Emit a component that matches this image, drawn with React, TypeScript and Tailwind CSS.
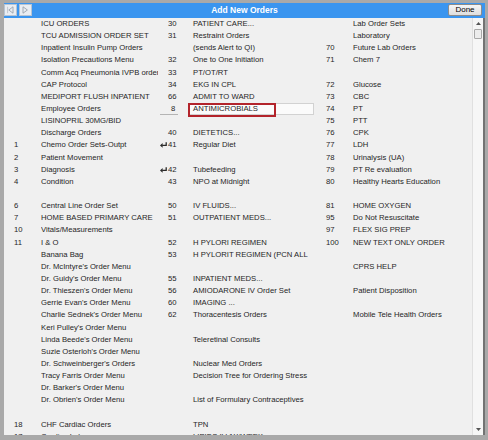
type Row = {
  n1?: string;
  a?: string;
  n2?: string;
  b?: string;
  n3?: string;
  c?: string;
  enter?: boolean;
  sel?: boolean;
};

const rows: Row[] = [
  { a: 'ICU ORDERS', n2: '30', b: 'PATIENT CARE...', c: 'Lab Order Sets' },
  { a: 'TCU ADMISSION ORDER SET', n2: '31', b: 'Restraint Orders', c: 'Laboratory' },
  { a: 'Inpatient Insulin Pump Orders', b: '(sends Alert to QI)', n3: '70', c: 'Future Lab Orders' },
  { a: 'Isolation Precautions Menu', n2: '32', b: 'One to One Initiation', n3: '71', c: 'Chem 7' },
  { a: 'Comm Acq Pneumonia IVPB order', n2: '33', b: 'PT/OT/RT' },
  { a: 'CAP Protocol', n2: '34', b: 'EKG IN CPL', n3: '72', c: 'Glucose' },
  { a: 'MEDIPORT FLUSH INPATIENT', n2: '66', b: 'ADMIT TO WARD', n3: '73', c: 'CBC' },
  { a: 'Employee Orders', n2: '8', b: 'ANTIMICROBIALS', n3: '74', c: 'PT', sel: true },
  { a: 'LISINOPRIL 30MG/BID', n3: '75', c: 'PTT' },
  { a: 'Discharge Orders', n2: '40', b: 'DIETETICS...', n3: '76', c: 'CPK' },
  { n1: '1', a: 'Chemo Order Sets-Outpt', n2: '41', enter: true, b: 'Regular Diet', n3: '77', c: 'LDH' },
  { n1: '2', a: 'Patient Movement', n3: '78', c: 'Urinalysis (UA)' },
  { n1: '3', a: 'Diagnosis', n2: '42', enter: true, b: 'Tubefeeding', n3: '79', c: 'PT Re evaluation' },
  { n1: '4', a: 'Condition', n2: '43', b: 'NPO at Midnight', n3: '80', c: 'Healthy Hearts Education' },
  {},
  { n1: '6', a: 'Central Line Order Set', n2: '50', b: 'IV FLUIDS...', n3: '81', c: 'HOME OXYGEN' },
  { n1: '7', a: 'HOME BASED PRIMARY CARE', n2: '51', b: 'OUTPATIENT MEDS...', n3: '95', c: 'Do Not Resuscitate' },
  { n1: '10', a: 'Vitals/Measurements', n3: '97', c: 'FLEX SIG PREP' },
  { n1: '11', a: 'I & O', n2: '52', b: 'H PYLORI REGIMEN', n3: '100', c: 'NEW TEXT ONLY ORDER' },
  { a: 'Banana Bag', n2: '53', b: 'H PYLORIT REGIMEN (PCN ALL' },
  { a: "Dr. McIntyre's Order Menu", c: 'CPRS HELP' },
  { a: "Dr. Guidy's Order Menu", n2: '55', b: 'INPATIENT MEDS...' },
  { a: "Dr. Thieszen's Order Menu", n2: '56', b: 'AMIODARONE IV Order Set', c: 'Patient Disposition' },
  { a: "Gerrie Evan's Order Menu", n2: '60', b: 'IMAGING ...' },
  { a: "Charlie Sednek's Order Menu", n2: '62', b: 'Thoracentesis Orders', c: 'Mobile Tele Health Orders' },
  { a: "Keri Pulley's Order Menu" },
  { a: "Linda Beede's Order Menu", b: 'Teleretinal Consults' },
  { a: "Suzie Osterloh's Order Menu" },
  { a: "Dr. Schweinberger's Orders", b: 'Nuclear Med Orders' },
  { a: 'Tracy Farris Order Menu', b: 'Decision Tree for Ordering Stress' },
  { a: "Dr. Barker's Order Menu" },
  { a: "Dr. Obrien's Order Menu", b: 'List of Formulary Contraceptives' },
  {},
  { n1: '18', a: 'CHF Cardiac Orders', b: 'TPN' },
  { n1: '17', a: 'Cardiac Labs', b: 'LIPIDS IV 1X/WEEK' },
];

function EnterArrow() {
  return (
    <svg width="7" height="6" viewBox="0 0 7 6" aria-hidden="true">
      <path d="M6.2 0.3V3.4H2.2" stroke="#2a2a2a" strokeWidth="1.3" fill="none" />
      <path d="M0 3.4L2.6 1.1V5.7Z" fill="#2a2a2a" />
    </svg>
  );
}

function NavButton({ dir }: { dir: 'left' | 'right' }) {
  return (
    <span className="flex h-[12px] w-[13px] items-center justify-center border border-[#b8c4d2] bg-[#e9edf2]">
      <svg width="7" height="8" viewBox="0 0 7 8" aria-hidden="true">
        {dir === 'left' ? (
          <>
            <path d="M6 0.8V7.2L1.8 4Z" fill="none" stroke="#9aa3ad" strokeWidth="0.9" />
            <path d="M0.6 0.8V7.2" stroke="#b5bcc5" strokeWidth="0.8" />
          </>
        ) : (
          <path d="M1 0.8V7.2L5.4 4Z" fill="none" stroke="#9aa3ad" strokeWidth="0.9" />
        )}
      </svg>
    </span>
  );
}

function OrderRow({ r }: { r: Row }) {
  return (
    <div className="grid h-[12.15px] grid-cols-[27px_117px_31px_127px_37px_1fr] leading-[12.15px]">
      <span>{r.n1}</span>
      <span className="overflow-hidden whitespace-nowrap">{r.a}</span>
      <span className="flex items-center">
        {r.sel ? (
          <span className="ml-[2px] h-[12px] w-[18px] border-b border-[#b4b4b4] pl-[11px] leading-[12px]">{r.n2}</span>
        ) : (
          <>
            <span className="flex w-[10px] items-center pl-[2px]">{r.enter && <EnterArrow />}</span>
            <span>{r.n2}</span>
          </>
        )}
      </span>
      {r.sel ? (
        <span className="relative block h-full w-[125px] border border-[#d2d2d2] bg-[#fbfbfb] pl-[3px] leading-[10px]">
          {r.b}
          <span className="absolute -left-[2px] -top-[1px] h-[14px] w-[88px] border-2 border-[#b3242b]" />
        </span>
      ) : (
        <span className="overflow-hidden whitespace-nowrap pl-[4px]">{r.b}</span>
      )}
      <span className="pl-[10px]">{r.n3}</span>
      <span className="overflow-hidden whitespace-nowrap">{r.c}</span>
    </div>
  );
}

export default function App() {
  return (
    <div className="flex h-[440px] w-[488px] flex-col overflow-hidden bg-[#a9a9a9] pb-[5px] pl-[4px] pr-[3px] pt-[3px] font-['Liberation_Sans',Arial,sans-serif] text-[#1f1f1f]">
      <div className="grid h-[15px] flex-none grid-cols-[1fr_auto_1fr] items-start bg-[#3a95ef]">
        <div className="mt-[1px] flex gap-[2px]">
          <NavButton dir="left" />
          <NavButton dir="right" />
        </div>
        <div className="text-[8.5px] font-bold leading-[15px] text-white">Add New Orders</div>
        <div className="mr-[3px] mt-[1px] flex justify-end">
          <button
            type="button"
            className="flex h-[12px] w-[34px] items-center justify-center rounded-[2px] border border-[#8c8c8c] bg-gradient-to-b from-[#f6f6f6] to-[#dedede] text-[8px] leading-none text-black"
          >
            Done
          </button>
        </div>
      </div>

      <div className="flex min-h-0 flex-1 border-r-2 border-[#737373] bg-[#f0f0f0]">
        <div className="min-w-0 flex-1 overflow-hidden pl-[10px] text-[7.7px]">
          {rows.map((r, i) => (
            <OrderRow key={i} r={r} />
          ))}
        </div>
        <div className="flex w-[11px] flex-none flex-col border-l border-[#e0e0e0] bg-[#f6f6f6]">
          <div className="flex h-[11px] items-center justify-center">
            <svg width="5" height="3" viewBox="0 0 5 3" aria-hidden="true">
              <path d="M0 3L2.5 0L5 3Z" fill="#555" />
            </svg>
          </div>
          <div className="mx-[1px] h-[10px] rounded-[1px] border border-[#a8a8a8] bg-[#ececec]" />
          <div className="flex-1" />
          <div className="flex h-[11px] items-center justify-center">
            <svg width="5" height="3" viewBox="0 0 5 3" aria-hidden="true">
              <path d="M0 0L2.5 3L5 0Z" fill="#555" />
            </svg>
          </div>
        </div>
      </div>
    </div>
  );
}
